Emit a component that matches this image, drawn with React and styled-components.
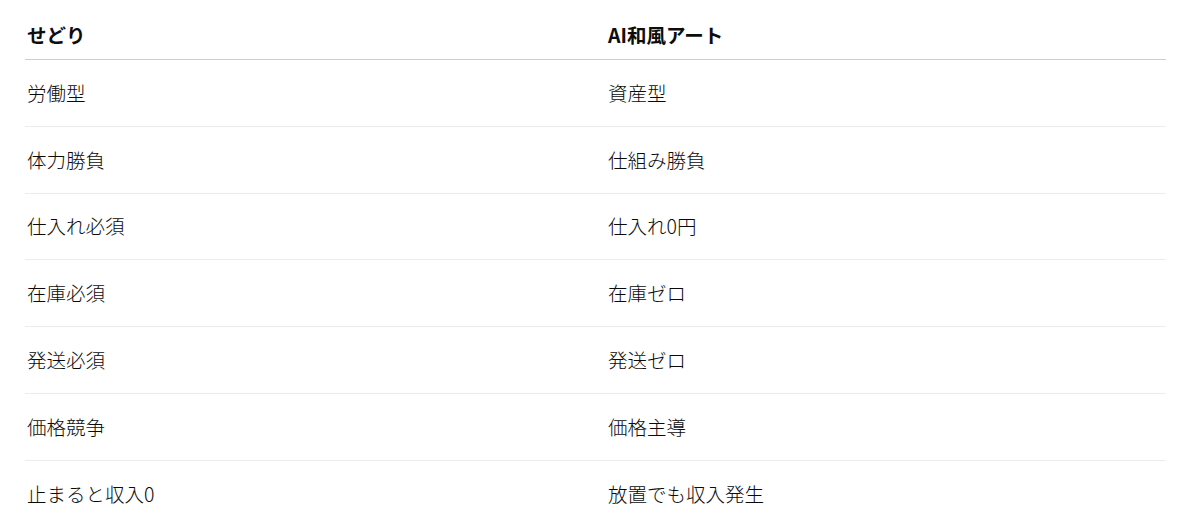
import React from "react";
import styled, { createGlobalStyle } from "styled-components";

const Global = createGlobalStyle`
  html, body { margin: 0; padding: 0; background: #ffffff; }
  body { font-family: "Noto Sans CJK JP", "Noto Sans", sans-serif; }
`;

const Page = styled.div`
  padding: 0 34px 0 25px;
  width: 1141px;
`;

const Table = styled.table`
  width: 1141px;
  border-collapse: collapse;
  table-layout: fixed;
  font-size: 19.5px;
  line-height: 30px;
`;

const HeadCell = styled.th`
  text-align: left;
  font-weight: 700;
  color: #0d0d0d;
  padding: 20px 2px 9px;
  border-bottom: 1px solid #cdcdcd;
  width: ${(p) => p.$w};
`;

const Row = styled.tr`
  border-bottom: 1px solid ${(p) => (p.$last ? "transparent" : "#ececec")};
`;

const Cell = styled.td`
  color: #0a0a0a;
  font-weight: 300;
  padding: 17.9px 2px;
`;

const rows = [
  ["労働型", "資産型"],
  ["体力勝負", "仕組み勝負"],
  ["仕入れ必須", "仕入れ0円"],
  ["在庫必須", "在庫ゼロ"],
  ["発送必須", "発送ゼロ"],
  ["価格競争", "価格主導"],
  ["止まると収入0", "放置でも収入発生"],
];

export default function App() {
  return (
    <>
      <Global />
      <Page>
        <Table>
          <thead>
            <tr>
              <HeadCell $w="577px">せどり</HeadCell>
              <HeadCell $w="556px">AI和風アート</HeadCell>
            </tr>
          </thead>
          <tbody>
            {rows.map((r, i) => (
              <Row key={i} $last={i === rows.length - 1}>
                <Cell>{r[0]}</Cell>
                <Cell>{r[1]}</Cell>
              </Row>
            ))}
          </tbody>
        </Table>
      </Page>
    </>
  );
}
